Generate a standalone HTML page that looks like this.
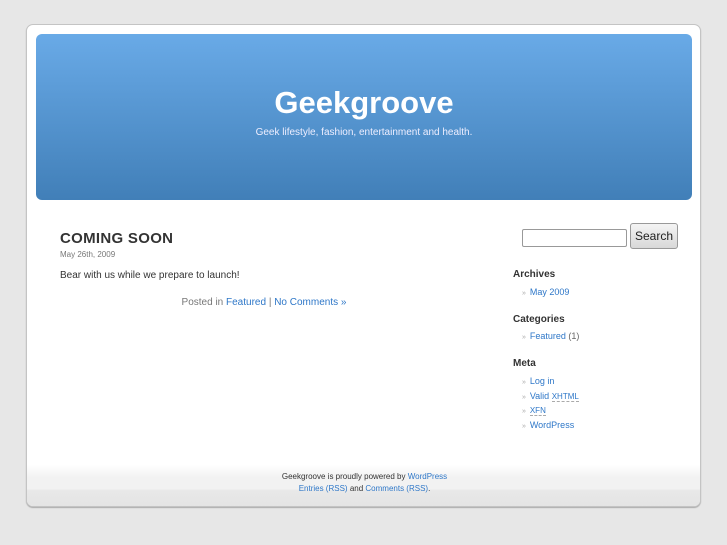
<!DOCTYPE html>
<html><head><meta charset="utf-8"><style>
*{margin:0;padding:0;box-sizing:border-box}
body{width:727px;height:545px;background:#e7e7e7;font-family:"Liberation Sans",sans-serif;position:relative;overflow:hidden}
#page{position:absolute;left:26px;top:24px;width:675px;height:483px;background:#fff;border:1px solid #c4c4c4;border-radius:7px;box-shadow:0 1px 1px #aaa;overflow:hidden}
#header{position:absolute;left:9px;top:9px;width:656px;height:166px;border-radius:6px;background:linear-gradient(#69aae7,#417fb8);text-align:center;color:#fff}
#header h1{font-size:31px;font-weight:bold;margin-top:51px;letter-spacing:0}
#header p{font-size:10px;margin-top:6px;color:#eef}
a{color:#2e77c8;text-decoration:none}
.post{position:absolute;left:33px;top:205px;width:400px}
.post h2{font-size:15px;color:#333;font-weight:bold;letter-spacing:.3px}
.post .d{font-size:8px;color:#777;margin-top:3px}
.post .e{font-size:10px;color:#333;margin-top:11px}
.post .m{font-size:10px;color:#777;margin-top:16px;text-align:center;padding-left:8px}
#side{position:absolute;left:486px;top:197px;width:170px;font-size:9px}
#side input{position:absolute;left:9px;top:7px;width:105px;height:18px;border:1px solid #999;border-radius:2px}
#side button{position:absolute;left:117px;top:1px;width:48px;height:26px;border:1px solid #999;border-radius:3px;background:linear-gradient(#f4f4f4,#d8d8d8);font-family:"Liberation Sans",sans-serif;font-size:12px;color:#222}
#side h3{font-size:10px;color:#333;font-weight:bold;position:absolute;left:0}
#side ul{list-style:none;position:absolute;left:9px}
#side li{height:14.5px;color:#666}
#side li:before{content:"» ";color:#aaa;font-size:7px;margin-right:2px}
abbr{border-bottom:1px dashed #aaa;font-size:8px}
#foot{position:absolute;left:0;top:440px;width:675px;height:43px;background:linear-gradient(#fff,#f2f2f2 30%,#f2f2f2 55%,#e8e8e8 60%,#e4e4e4);text-align:center;font-size:8px;color:#333;padding-top:6px;line-height:12px}
</style></head><body>
<div id="page">
<div id="header"><h1>Geekgroove</h1><p>Geek lifestyle, fashion, entertainment and health.</p></div>
<div class="post"><h2>COMING SOON</h2><div class="d">May 26th, 2009</div><div class="e">Bear with us while we prepare to launch!</div><div class="m">Posted in <a>Featured</a> | <a>No Comments »</a></div></div>
<div id="side">
<input><button>Search</button>
<h3 style="top:47px">Archives</h3><ul style="top:65px"><li><a>May 2009</a></li></ul>
<h3 style="top:92px">Categories</h3><ul style="top:109px"><li><a>Featured</a> (1)</li></ul>
<h3 style="top:136px">Meta</h3><ul style="top:154px"><li><a>Log in</a></li><li><a>Valid <abbr>XHTML</abbr></a></li><li><a><abbr>XFN</abbr></a></li><li><a>WordPress</a></li></ul>
</div>
<div id="foot">Geekgroove is proudly powered by <a>WordPress</a><br><a>Entries (RSS)</a> and <a>Comments (RSS)</a>.</div>
</div>
</body></html>
